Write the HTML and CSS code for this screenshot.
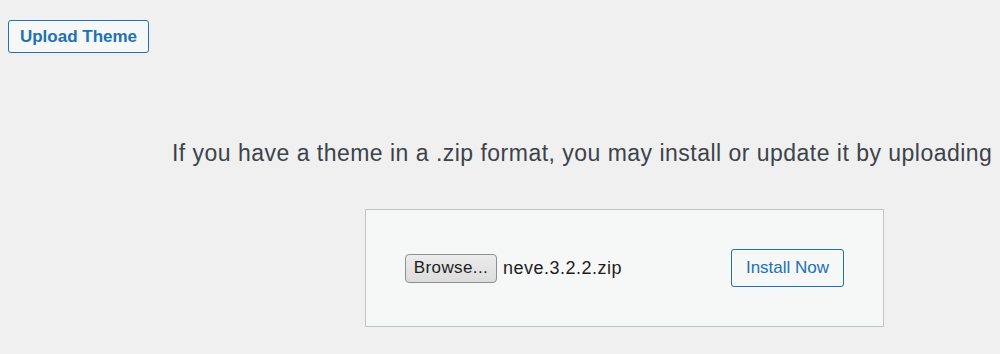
FILE: index.html
```html
<!DOCTYPE html>
<html>
<head>
<meta charset="utf-8">
<link rel="stylesheet" href="styles.css">
</head>
<body>
<div class="page">
  <div class="top">
    <button class="upload-btn">Upload Theme</button>
  </div>
  <p class="help">If you have a theme in a .zip format, you may install or update it by uploading</p>
  <div class="form-box">
    <div class="file-field">
      <button class="browse">Browse...</button>
      <span class="filename">neve.3.2.2.zip</span>
    </div>
    <button class="install">Install Now</button>
  </div>
</div>
</body>
</html>
```

FILE: styles.css
```css
html, body {
  margin: 0;
  padding: 0;
  background: #f0f0f1;
  overflow: hidden;
}
.page {
  width: 1000px;
  height: 354px;
  font-family: "Liberation Sans", Arial, sans-serif;
  color: #3c434a;
  overflow: hidden;
}
.top {
  padding: 20px 0 0 8px;
}
.upload-btn {
  box-sizing: border-box;
  width: 141px;
  height: 33px;
  border: 1px solid #2271b1;
  border-radius: 3px;
  background: #f6f7f7;
  color: #2271b1;
  font-family: "Liberation Sans", Arial, sans-serif;
  font-weight: bold;
  font-size: 17px;
  padding: 0;
  display: block;
}
.help {
  margin: 0;
  padding: 87px 0 0 172px;
  font-size: 23px;
  letter-spacing: 0.48px;
  line-height: 26px;
  white-space: nowrap;
  color: #3c434a;
}
.form-box {
  box-sizing: border-box;
  margin: 43px 0 0 365px;
  width: 519px;
  height: 118px;
  border: 1px solid #c3c4c7;
  background: #f6f7f7;
  display: flex;
  align-items: center;
  padding: 0 39px 0 39px;
  justify-content: space-between;
}
.file-field {
  display: flex;
  align-items: center;
  gap: 6px;
}
.browse {
  box-sizing: border-box;
  width: 92px;
  height: 29px;
  border: 1px solid #8f8f8f;
  border-radius: 4px;
  background: linear-gradient(#ececec, #dcdcdc);
  color: #1d1d1d;
  font-family: "Liberation Sans", Arial, sans-serif;
  font-size: 17px;
  letter-spacing: 0.4px;
  padding: 0;
}
.filename {
  font-size: 18px;
  letter-spacing: 0.5px;
  color: #1d1d1d;
}
.install {
  box-sizing: border-box;
  width: 113px;
  height: 38px;
  border: 1px solid #2271b1;
  border-radius: 3px;
  background: #f6f7f7;
  color: #2271b1;
  font-family: "Liberation Sans", Arial, sans-serif;
  font-size: 17px;
  padding: 0;
}
```
